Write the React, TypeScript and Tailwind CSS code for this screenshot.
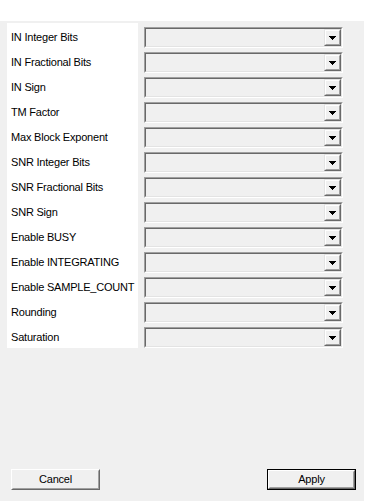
import React from "react";

const labels = [
  "IN Integer Bits",
  "IN Fractional Bits",
  "IN Sign",
  "TM Factor",
  "Max Block Exponent",
  "SNR Integer Bits",
  "SNR Fractional Bits",
  "SNR Sign",
  "Enable BUSY",
  "Enable INTEGRATING",
  "Enable SAMPLE_COUNT",
  "Rounding",
  "Saturation",
];

function Combo() {
  return (
    <div className="h-[21px] w-[199px] border border-t-[#a0a0a0] border-l-[#a0a0a0] border-b-white border-r-white">
      <div className="flex h-full w-full justify-end border border-t-[#696969] border-l-[#696969] border-b-[#e3e3e3] border-r-[#e3e3e3] bg-[#f0f0f0]">
        <div className="h-[17px] w-[17px] border border-t-[#e3e3e3] border-l-[#e3e3e3] border-b-[#696969] border-r-[#696969]">
          <div className="flex h-full w-full items-center justify-center border border-t-white border-l-white border-b-[#a0a0a0] border-r-[#a0a0a0] bg-[#f0f0f0]">
            <svg width="7" height="4" viewBox="0 0 7 4" className="block">
              <path d="M0 0h7v1H0zM1 1h5v1H1zM2 2h3v1H2zM3 3h1v1H3z" fill="#000" />
            </svg>
          </div>
        </div>
      </div>
    </div>
  );
}

function Btn({ label, def }: { label: string; def?: boolean }) {
  return (
    <div
      className={
        "h-[21px] w-[89px] " +
        (def ? "border border-black" : "")
      }
    >
      <div className="h-full w-full border border-t-white border-l-white border-b-[#696969] border-r-[#696969]">
        <div className="flex h-full w-full items-center justify-center border border-t-[#f0f0f0] border-l-[#f0f0f0] border-b-[#a0a0a0] border-r-[#a0a0a0] bg-[#f0f0f0] text-[11px] tracking-[-0.2px] text-black">
          {label}
        </div>
      </div>
    </div>
  );
}

export default function App() {
  return (
    <div
      className="h-[501px] w-[368px] bg-white pt-[21px]"
      style={{ fontFamily: '"Liberation Sans", Arial, sans-serif' }}
    >
      <div className="flex h-[480px] w-[364px] flex-col bg-[#f0f0f0]">
        <div className="flex pl-[7px] pt-[2px]">
          <div className="flex w-[131px] flex-col gap-[4px] bg-white pl-[4px] pt-[4px]">
            {labels.map((l) => (
              <div
                key={l}
                className="flex h-[21px] items-center whitespace-nowrap text-[11px] tracking-[-0.2px] text-black"
              >
                {l}
              </div>
            ))}
          </div>
          <div className="ml-[6px] flex flex-col gap-[4px] pt-[4px]">
            {labels.map((l) => (
              <Combo key={l} />
            ))}
          </div>
        </div>
        <div className="mt-auto flex justify-between pb-[11px] pl-[11px] pr-[8px]">
          <Btn label="Cancel" />
          <Btn label="Apply" def />
        </div>
      </div>
    </div>
  );
}
